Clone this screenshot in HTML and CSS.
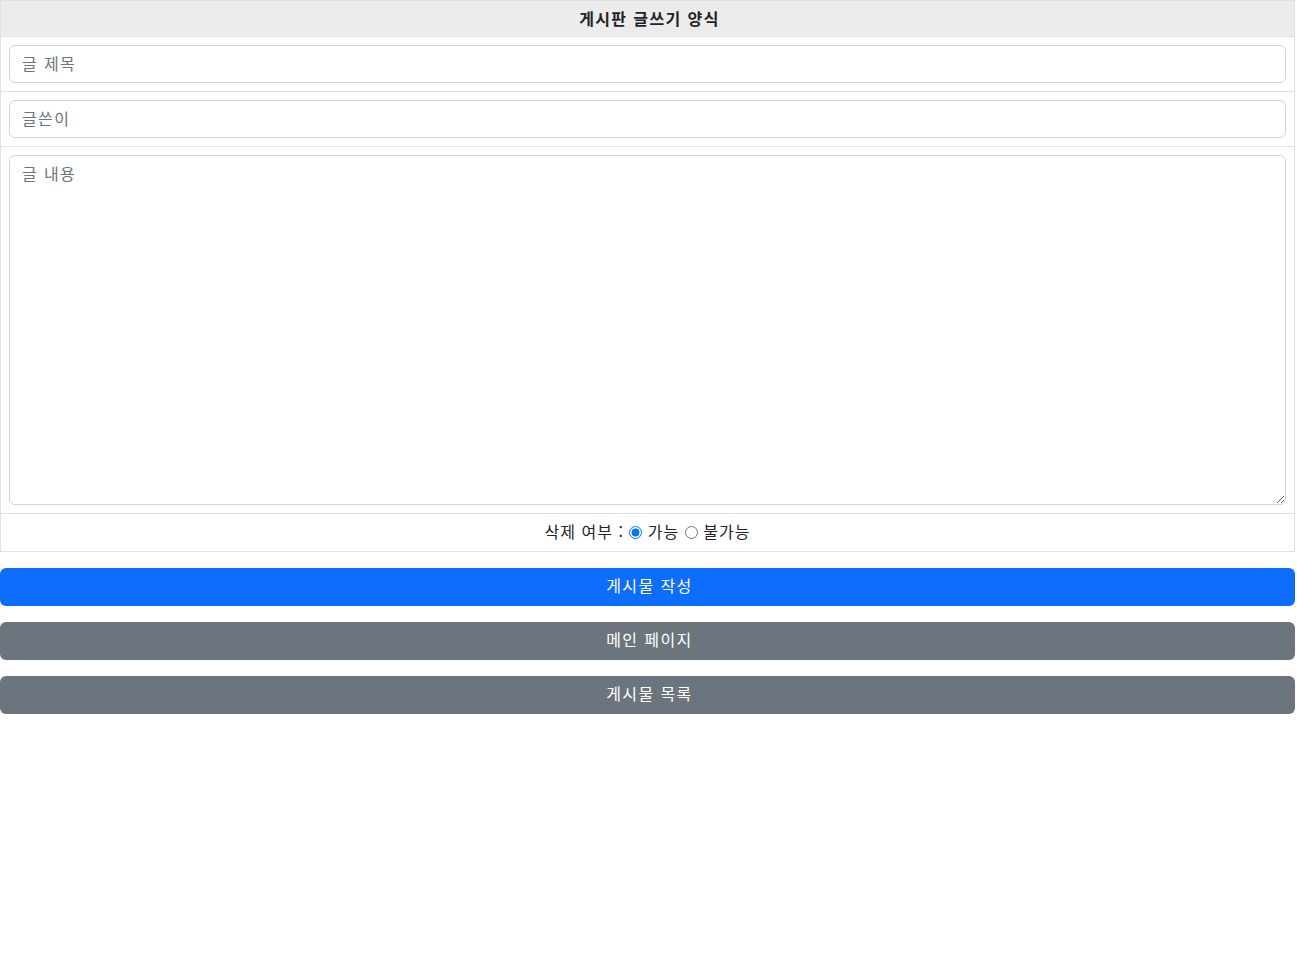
FILE: index.html
```html
<!DOCTYPE html>
<html lang="ko">
<head>
<meta charset="utf-8">
<title>게시판 글쓰기 양식</title>
<link rel="stylesheet" href="styles.css">
</head>
<body>
<div class="page">
  <form class="write-form">
    <table class="form-table">
      <thead>
        <tr><th class="head-cell">게시판 글쓰기 양식</th></tr>
      </thead>
      <tbody>
        <tr><td class="cell"><input class="form-control" type="text" placeholder="글 제목"></td></tr>
        <tr><td class="cell"><input class="form-control" type="text" placeholder="글쓴이"></td></tr>
        <tr><td class="cell"><textarea class="form-control area" placeholder="글 내용"></textarea></td></tr>
        <tr><td class="cell center">삭제 여부 : <input class="radio" type="radio" name="del" checked> 가능 <input class="radio" type="radio" name="del"> 불가능</td></tr>
      </tbody>
    </table>
    <div class="actions">
      <button type="button" class="btn btn-primary">게시물 작성</button>
      <button type="button" class="btn btn-secondary">메인 페이지</button>
      <button type="button" class="btn btn-secondary">게시물 목록</button>
    </div>
  </form>
</div>
</body>
</html>
```
FILE: styles.css
```css
* { box-sizing: border-box; }
html, body { margin: 0; padding: 0; background: #fff; }
body {
  font-family: "Noto Sans CJK KR", "Noto Sans", sans-serif;
  font-size: 16px;
  line-height: 1.5;
  color: #212529;
  letter-spacing: 1.4px;
}
.page { width: 1295px; }
.form-table {
  width: 100%;
  border-collapse: collapse;
  border: 1px solid #dee2e6;
}
.head-cell {
  background: #ececec;
  font-weight: 700;
  font-size: 16px;
  text-align: center;
  height: 36px;
  padding: 0 8px 2px 12px;
  border-bottom: 1px solid #dee2e6;
  vertical-align: middle;
}
.cell {
  padding: 8px;
  border-bottom: 1px solid #dee2e6;
  vertical-align: middle;
}
.center { text-align: center; height: 38px; padding: 2px 8px 5px; letter-spacing: 1px; }
.form-control {
  display: block;
  width: 100%;
  height: 38px;
  padding: 5px 12px 7px;
  font-family: inherit;
  font-size: 16px;
  line-height: 1.5;
  letter-spacing: 1.4px;
  color: #212529;
  background: #fff;
  border: 1px solid #ced4da;
  border-radius: 6px;
  outline: none;
}
.form-control::placeholder { color: #6c757d; opacity: 1; }
.area { height: 350px; resize: vertical; }
.radio { margin: 0; vertical-align: -1px; width: 13px; height: 13px; }
.actions {
  display: flex;
  flex-direction: column;
  gap: 16px;
  margin-top: 16px;
}
.btn {
  display: block;
  width: 100%;
  height: 38px;
  border: none;
  border-radius: 6px;
  color: #fff;
  font-family: inherit;
  font-size: 16px;
  line-height: 1.5;
  letter-spacing: 1.4px;
  padding: 4px 10px 8px 14px;
  cursor: pointer;
}
.btn-primary { background: #0d6efd; }
.btn-secondary { background: #6c757d; }
```
